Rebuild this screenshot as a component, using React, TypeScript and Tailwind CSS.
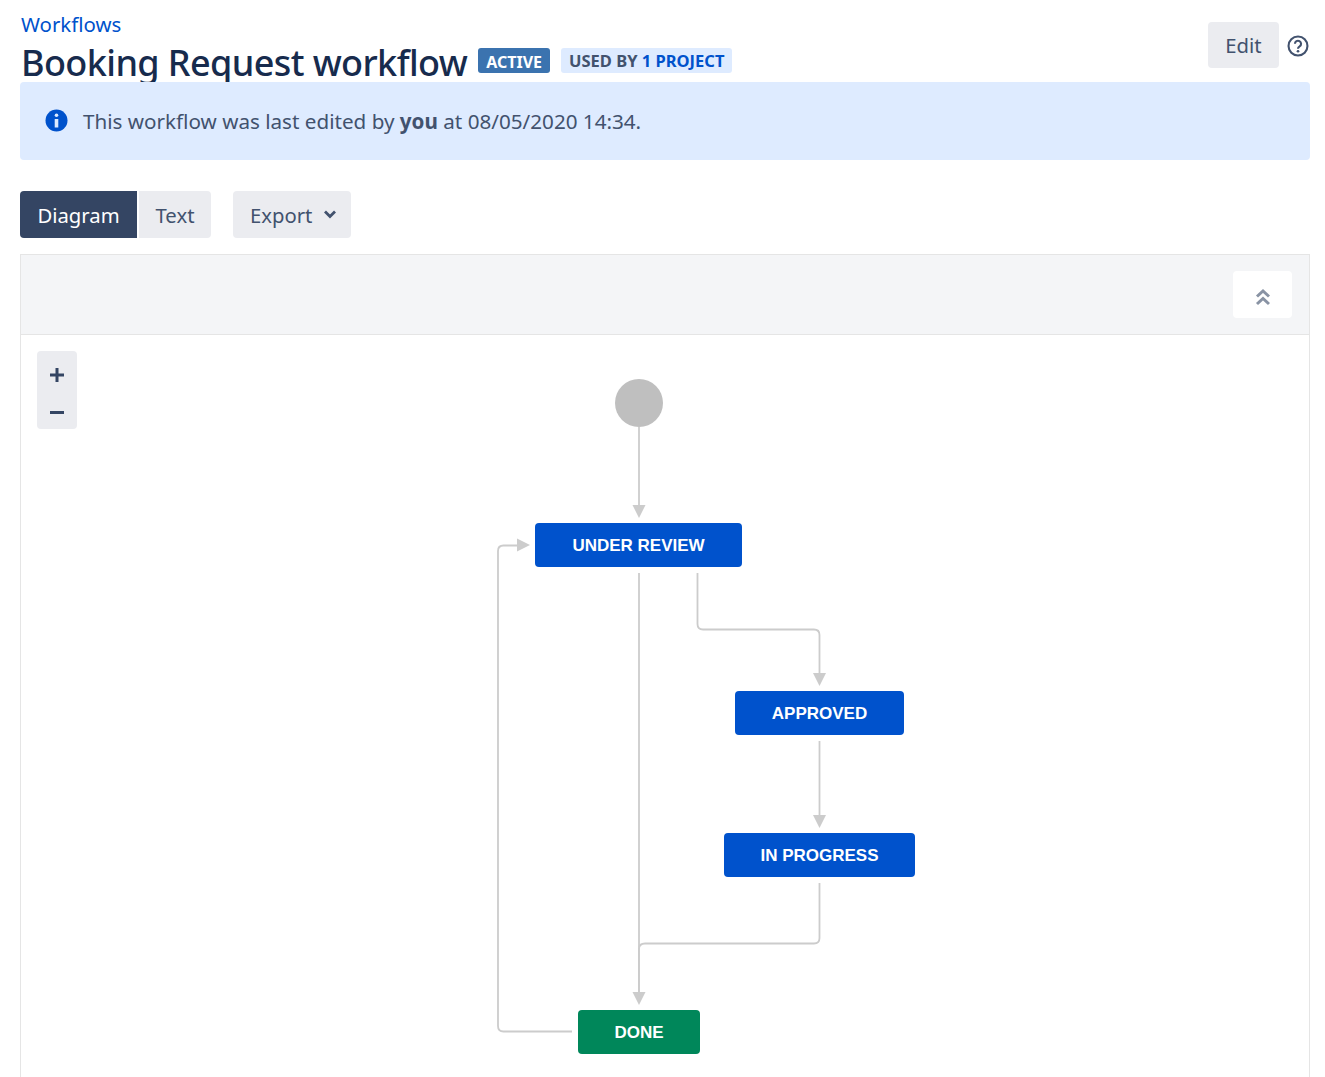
const font = "font-['Noto_Sans',sans-serif]";

const Node = ({ label, className }: { label: string; className: string }) => (
  <div
    className={`absolute flex h-[44px] items-center justify-center rounded-[4px] pt-[2px] font-['Liberation_Sans',sans-serif] text-[17px] font-bold text-white ${className}`}
  >
    {label}
  </div>
);

const DiagramEdges = () => (
  <svg className="absolute left-0 top-0" width="1288" height="742" viewBox="21 335 1288 742" fill="none">
    <g stroke="#cccccc" strokeWidth="1.8">
      <path d="M639 427V506" />
      <path d="M572 1031.5H503.5Q498 1031.5 498 1026V551Q498 545.5 503.5 545.5H518" />
      <path d="M639 573V993" />
      <path d="M697.5 573V624Q697.5 629.5 703 629.5H814Q819.5 629.5 819.5 635V674" />
      <path d="M819.5 741V816" />
      <path d="M819.5 883V938Q819.5 943.5 814 943.5H645Q639 943.5 639 949V993" />
    </g>
    <g fill="#cccccc">
      <path d="M632.5 505H645.5L639 518Z" />
      <path d="M517 538.5V551.5L530 545Z" />
      <path d="M813 673H826L819.5 686Z" />
      <path d="M813 815H826L819.5 828Z" />
      <path d="M632.5 992H645.5L639 1005Z" />
    </g>
  </svg>
);

export default function App() {
  return (
    <div className={`${font} h-[1077px] overflow-hidden bg-white pl-[20px] pr-[15px] text-[#42526e]`}>
      <header className="flex h-[82px] items-start justify-between overflow-hidden">
        <div>
          <a className="block pt-[9px] pl-px text-[20.4px] leading-[30px] text-[#0052cc]">Workflows</a>
          <div className="mt-px flex items-center pl-px">
            <h1 className="text-[36px] leading-[46px] font-medium tracking-[-0.6px] whitespace-nowrap text-[#172b4d]">
              Booking Request workflow
            </h1>
            <span className="ml-[11px] -mt-[5px] flex h-[25px] items-center rounded-[3px] bg-[#3b73af] px-[8px] pt-[2px] text-[16px] font-bold text-white">
              ACTIVE
            </span>
            <span className="ml-[11px] -mt-[5px] flex h-[25px] items-center rounded-[3px] bg-[#deebff] px-[8px] pt-[2px] text-[16.5px] font-bold text-[#42526e]">
              USED BY&nbsp;<span className="text-[#0052cc]">1 PROJECT</span>
            </span>
          </div>
        </div>
        <div className="mt-[22px] flex items-center">
          <button className="h-[46px] w-[71px] rounded-[4px] bg-[#ebecf0] pt-[1px] text-[20.3px]">Edit</button>
          <svg className="ml-[8px] mr-[1px] mt-[2px]" width="22" height="22" viewBox="0 0 23 23" fill="none">
            <circle cx="11.5" cy="11.5" r="9.9" stroke="#42526e" strokeWidth="2.2" />
            <path d="M8.3 9.2a3.2 3.2 0 1 1 4.9 2.7c-1.1.7-1.7 1.2-1.7 2.4" stroke="#42526e" strokeWidth="2.2" />
            <circle cx="11.5" cy="17" r="1.4" fill="#42526e" />
          </svg>
        </div>
      </header>

      <div className="flex h-[78px] items-center rounded-[4px] bg-[#deebff] pl-[25px]">
        <svg className="mb-[2px]" width="23" height="23" viewBox="0 0 23 23">
          <circle cx="11.5" cy="11.5" r="11" fill="#0052cc" />
          <rect x="9.7" y="4.5" width="3.6" height="3.6" rx="1.8" fill="#deebff" />
          <path d="M9.7 10h3.6v8.500H9.700z" fill="#deebff" />
        </svg>
        <p className="ml-[15px] text-[20.65px] whitespace-nowrap">
          This workflow was last edited by <strong className="font-bold">you</strong> at 08/05/2020 14:34.
        </p>
      </div>

      <div className="mt-[31px] flex h-[47px] items-stretch text-[20.3px]">
        <button className="w-[117px] rounded-l-[4px] bg-[#344563] pt-[1px] text-white">Diagram</button>
        <button className="ml-[2px] w-[72px] rounded-r-[4px] bg-[#ebecf0] pt-[1px]">Text</button>
        <button className="ml-[22px] flex w-[118px] items-center justify-start gap-[11px] rounded-[4px] bg-[#ebecf0] pl-[17px] pt-[1px]">
          Export
          <svg className="mb-[3px]" width="14" height="10" viewBox="0 0 14 10" fill="none">
            <path d="M2 2.5l5 5 5-5" stroke="#42526e" strokeWidth="2.8" />
          </svg>
        </button>
      </div>

      <section className="mt-[16px] border border-[#e5e5e5]">
        <div className="flex h-[80px] items-center justify-end border-b border-[#e5e5e5] bg-[#f4f5f7] pr-[17px]">
          <button className="flex h-[47px] w-[59px] items-center justify-center rounded-[4px] bg-white pt-[5px]">
            <svg width="18" height="20" viewBox="0 0 18 20" fill="none" stroke="#8993a4" strokeWidth="3">
              <path d="M3 9.500L9 4l6 5.500" />
              <path d="M3 17L9 11.500l6 5.500" />
            </svg>
          </button>
        </div>

        <div className="relative h-[742px]">
          <DiagramEdges />
          <div className="absolute left-[16px] top-[16px] flex h-[78px] w-[40px] flex-col items-center gap-[23px] rounded-[4px] bg-[#ebecf0] pt-[17px]">
            <svg width="14" height="14" viewBox="0 0 14 14" fill="#344563">
              <path d="M5.500 0h3v5.500H14v3H8.500V14h-3V8.500H0v-3h5.500z" />
            </svg>
            <svg width="14" height="14" viewBox="0 0 14 14" fill="#344563">
              <path d="M0 6h14v3H0z" />
            </svg>
          </div>
          <div className="absolute left-[594px] top-[44px] h-[48px] w-[48px] rounded-full bg-[#bfbfbf]" />
          <Node label="UNDER REVIEW" className="left-[514px] top-[188px] w-[207px] bg-[#0052cc]" />
          <Node label="APPROVED" className="left-[714px] top-[356px] w-[169px] bg-[#0052cc]" />
          <Node label="IN PROGRESS" className="left-[703px] top-[498px] w-[191px] bg-[#0052cc]" />
          <Node label="DONE" className="left-[557px] top-[675px] w-[122px] bg-[#00875a]" />
        </div>
      </section>
    </div>
  );
}
